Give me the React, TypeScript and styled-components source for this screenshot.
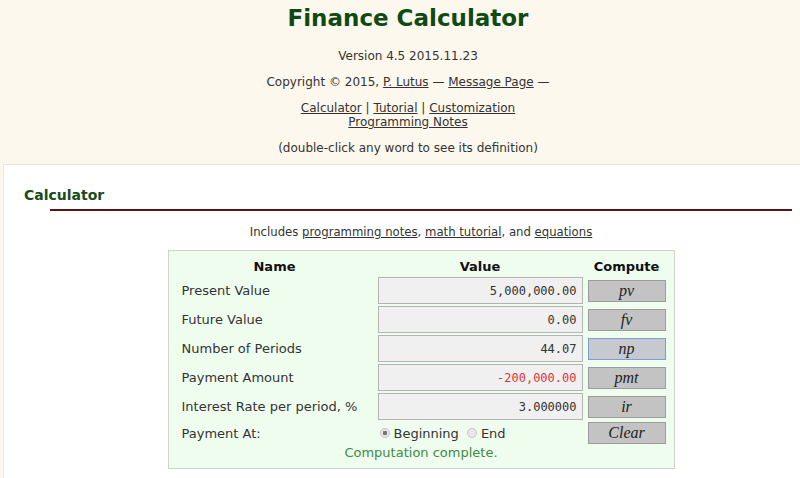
import React, { useState } from 'react';
import styled, { createGlobalStyle } from 'styled-components';

const GlobalStyle = createGlobalStyle`
  html, body {
    margin: 0;
    padding: 0;
    background: #fcf8ee;
    overflow: hidden;
  }
  body {
    font-family: "DejaVu Sans", Verdana, sans-serif;
    color: #333;
  }
`;

const Header = styled.header`
  display: flex;
  flex-direction: column;
  align-items: center;
  padding: 4px 0 0 16px;
  text-align: center;
`;

const Title = styled.h1`
  margin: 0 0 17px 0;
  font-size: 23px;
  line-height: 28px;
  font-weight: bold;
  color: #0f4a12;
`;

const Para = styled.p<{ $gap?: number }>`
  margin: 0 0 ${p => (p.$gap ?? 12)}px 0;
  font-size: 12px;
  line-height: 14px;
`;

const Link = styled.a`
  color: #333;
  text-decoration: underline;
  cursor: pointer;
`;

const Panel = styled.section`
  margin-left: 3px;
  background: #fff;
  border-top: 1px solid #ebe6d2;
  border-left: 1px solid #ebe6d2;
  padding-top: 21px;
  min-height: 292px;
`;

const SectionTitle = styled.h2`
  margin: 0 0 5px 20px;
  font-size: 14px;
  line-height: 18px;
  font-weight: bold;
  color: #1a4a1c;
`;

const Rule = styled.hr`
  margin: 0 8px 0 46px;
  border: none;
  height: 2px;
  background: #5e1414;
`;

const Body = styled.div`
  margin: 14px 8px 0 46px;
  display: flex;
  flex-direction: column;
  align-items: center;
`;

const Includes = styled.p`
  margin: 0 0 11px 0;
  font-size: 11.7px;
  line-height: 14px;
`;

const CalcBox = styled.div`
  width: 489px;
  padding: 8px;
  background: #effdef;
  border: 1px solid #cfd3cc;
  display: grid;
  grid-template-columns: 196px 205px 78px;
  column-gap: 5px;
  row-gap: 2px;
  font-size: 13px;
`;

const HeadCell = styled.div`
  font-weight: bold;
  color: #111;
  line-height: 16px;
  text-align: center;
`;

const NameCell = styled.div`
  padding-left: 5px;
  display: flex;
  align-items: center;
  color: #333;
`;

const ValueInput = styled.input<{ $negative?: boolean }>`
  box-sizing: border-box;
  width: 205px;
  height: 27px;
  padding: 0 5px;
  border: 1px solid #b4b4b4;
  background: #f0f0f0;
  font-family: "DejaVu Sans Mono", monospace;
  font-size: 12px;
  text-align: right;
  color: ${p => (p.$negative ? '#e0343c' : '#333')};
  outline: none;
`;

const ComputeButton = styled.button<{ $focused?: boolean }>`
  box-sizing: border-box;
  align-self: center;
  width: 78px;
  height: 22px;
  padding: 0;
  border: 1px solid ${p => (p.$focused ? '#7f9ccf' : '#9c9c9c')};
  background: ${p => (p.$focused ? '#c6c9d0' : '#c3c3c3')};
  font-family: "Liberation Serif", "Times New Roman", serif;
  font-style: italic;
  font-size: 16px;
  color: #222;
  cursor: pointer;
`;

const RadioGroup = styled.div`
  display: flex;
  align-items: center;
  padding-left: 2px;
  color: #333;
`;

const RadioLabel = styled.label`
  display: flex;
  align-items: center;
  gap: 4px;
  margin-right: 8px;
  cursor: pointer;
`;

const RadioDot = styled.span<{ $checked?: boolean }>`
  box-sizing: border-box;
  width: 10px;
  height: 10px;
  border-radius: 50%;
  border: 1px solid #c6c6c6;
  background: ${p => (p.$checked ? 'radial-gradient(circle, #777 0 2px, #e6e6e6 2.5px)' : '#e8e8e8')};
`;

const Status = styled.div`
  grid-column: 1 / -1;
  text-align: center;
  line-height: 14px;
  color: #3f8b3f;
`;

const rows = [
  { name: 'Present Value', value: '5,000,000.00', key: 'pv' },
  { name: 'Future Value', value: '0.00', key: 'fv' },
  { name: 'Number of Periods', value: '44.07', key: 'np' },
  { name: 'Payment Amount', value: '-200,000.00', key: 'pmt' },
  { name: 'Interest Rate per period, %', value: '3.000000', key: 'ir' },
];

export default function App() {
  const [atBeginning, setAtBeginning] = useState(true);

  return (
    <>
      <GlobalStyle />
      <Header>
        <Title>Finance Calculator</Title>
        <Para>Version 4.5 2015.11.23</Para>
        <Para>
          Copyright © 2015, <Link>P. Lutus</Link> — <Link>Message Page</Link> —
        </Para>
        <Para>
          <Link>Calculator</Link> | <Link>Tutorial</Link> | <Link>Customization</Link>
          <br />
          <Link>Programming Notes</Link>
        </Para>
        <Para $gap={9}>(double-click any word to see its definition)</Para>
      </Header>
      <Panel>
        <SectionTitle>Calculator</SectionTitle>
        <Rule />
        <Body>
          <Includes>
            Includes <Link>programming notes</Link>, <Link>math tutorial</Link>, and{' '}
            <Link>equations</Link>
          </Includes>
          <CalcBox>
            <HeadCell>Name</HeadCell>
            <HeadCell>Value</HeadCell>
            <HeadCell>Compute</HeadCell>
            {rows.map(row => (
              <React.Fragment key={row.key}>
                <NameCell>{row.name}</NameCell>
                <ValueInput
                  readOnly
                  value={row.value}
                  $negative={row.value.startsWith('-')}
                />
                <ComputeButton $focused={row.key === 'np'}>{row.key}</ComputeButton>
              </React.Fragment>
            ))}
            <NameCell>Payment At:</NameCell>
            <RadioGroup>
              <RadioLabel onClick={() => setAtBeginning(true)}>
                <RadioDot $checked={atBeginning} />
                Beginning
              </RadioLabel>
              <RadioLabel onClick={() => setAtBeginning(false)}>
                <RadioDot $checked={!atBeginning} />
                End
              </RadioLabel>
            </RadioGroup>
            <ComputeButton>Clear</ComputeButton>
            <Status>Computation complete.</Status>
          </CalcBox>
        </Body>
      </Panel>
    </>
  );
}
